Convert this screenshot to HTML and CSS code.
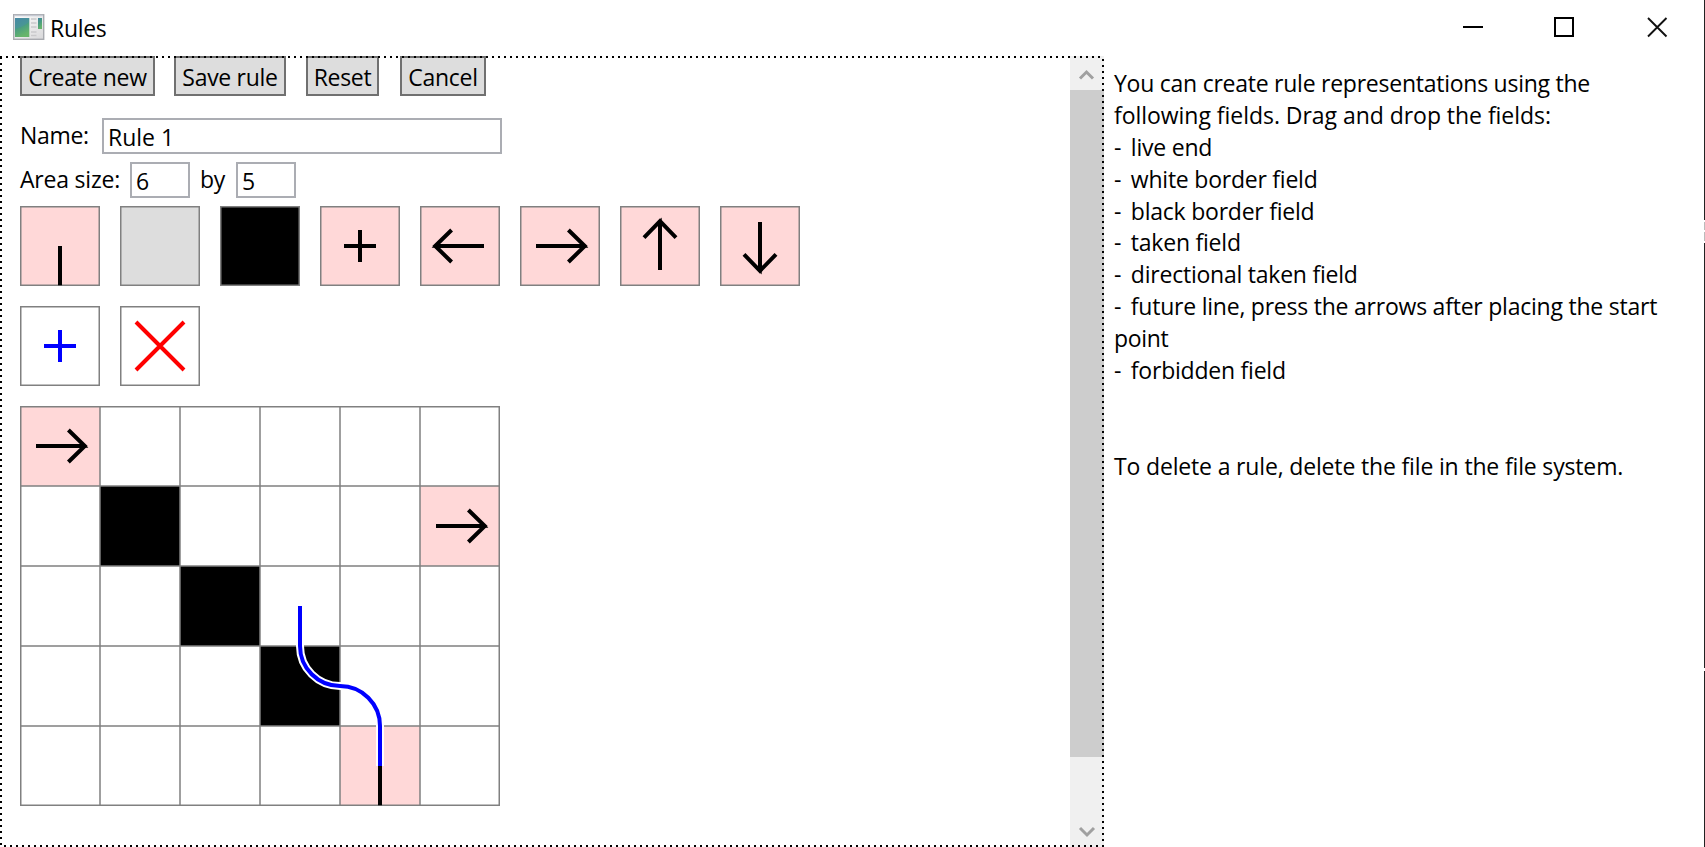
FILE: index.html
```html
<!DOCTYPE html>
<html lang="en">
<head>
<meta charset="utf-8">
<title>Rules</title>
<link rel="stylesheet" href="styles.css">
</head>
<body>
<svg class="defs" width="0" height="0" aria-hidden="true">
  <defs>
    <g id="arrow-right"><path d="M16 40H64M48.4 24L64.8 40L48.4 56" fill="none" stroke="#000" stroke-width="4"/><path d="M62 41.7L65 38.5L68.4 41.7Z"/></g>
    <g id="arrow-left"><path d="M64 40H16M31.6 24L15.2 40L31.6 56" fill="none" stroke="#000" stroke-width="4"/><path d="M18 41.7L15 38.5L11.6 41.7Z"/></g>
    <g id="arrow-up"><path d="M40 64V16M24 31.6L40 15.2L56 31.6" fill="none" stroke="#000" stroke-width="4"/><path d="M41.7 18L38.5 15L41.7 11.6Z"/></g>
    <g id="arrow-down"><path d="M40 16V64M24 48.4L40 64.8L56 48.4" fill="none" stroke="#000" stroke-width="4"/><path d="M41.7 62L38.5 65L41.7 68.4Z"/></g>
    <rect id="frame" x=".75" y=".75" width="78.5" height="78.5" fill="none" stroke="#808080" stroke-width="1.5"/>
  </defs>
</svg>
<div class="window">
  <header class="titlebar">
    <svg class="app-icon" width="32" height="28" viewBox="0 0 32 28">
      <defs>
        <linearGradient id="pane" x1="0" y1="0" x2=".4" y2="1"><stop offset="0" stop-color="#4383a0"/><stop offset=".5" stop-color="#479b83"/><stop offset="1" stop-color="#67b56b"/></linearGradient>
        <linearGradient id="body" x1="0" y1="0" x2="1" y2="1"><stop offset="0" stop-color="#fff"/><stop offset="1" stop-color="#d8d8da"/></linearGradient>
      </defs>
      <rect x=".7" y=".7" width="30" height="24.6" fill="url(#body)" stroke="#a9abb0" stroke-width="1.4"/>
      <path d="M1 1.5H30" stroke="#c6cad3" stroke-width="1.5"/>
      <rect x="2" y="4" width="14.3" height="19" fill="url(#pane)"/>
      <path d="M2 15Q10 13 16 8V4H2Z" fill="#4b8eac" opacity=".45"/>
      <path d="M18 5H23.5M18 9H23.5M18 13H23.5M18 18H23.5M18 21.5H23.5" stroke="#c9c9cb" stroke-width="1.4"/>
      <rect x="25" y="4" width="4" height="11" fill="url(#pane)"/>
    </svg>
    <span class="title">Rules</span>
    <svg class="controls" width="205" height="22" viewBox="0 0 205 22">
      <path d="M0 11H20" stroke="#000" stroke-width="2"/>
      <rect x="92" y="2" width="18" height="18" fill="none" stroke="#000" stroke-width="2"/>
      <path d="M185 2L203.500 20.500M203.500 2L185 20.500" stroke="#111" stroke-width="1.900"/>
    </svg>
  </header>
  <div class="content">
    <main class="editor">
      <div class="workspace">
        <div class="toolbar">
          <button class="btn create"><span>Create new</span></button>
          <button class="btn save"><span>Save rule</span></button>
          <button class="btn reset"><span>Reset</span></button>
          <button class="btn cancel"><span>Cancel</span></button>
        </div>
        <div class="row name-row"><span class="name-label">Name:</span><div class="field name">Rule 1</div></div>
        <div class="row size-row"><span class="size-label">Area size:</span><div class="field size">6</div><span class="by">by</span><div class="field size">5</div></div>
        <div class="palette">
          <svg class="tile pink"><use href="#frame"/><path d="M40 40V79.300" stroke="#000" stroke-width="4"/></svg>
          <svg class="tile grey"><use href="#frame"/></svg>
          <svg class="tile black"><use href="#frame"/></svg>
          <svg class="tile pink"><use href="#frame"/><path d="M24 40H56M40 24V56" stroke="#000" stroke-width="4"/></svg>
          <svg class="tile pink"><use href="#frame"/><use href="#arrow-left"/></svg>
          <svg class="tile pink"><use href="#frame"/><use href="#arrow-right"/></svg>
          <svg class="tile pink"><use href="#frame"/><use href="#arrow-up"/></svg>
          <svg class="tile pink"><use href="#frame"/><use href="#arrow-down"/></svg>
          <svg class="tile"><use href="#frame"/><path d="M24 40H56M40 24V56" stroke="#00f" stroke-width="4"/></svg>
          <svg class="tile"><use href="#frame"/><path d="M16 16L64 64M64 16L16 64" stroke="#f00" stroke-width="4"/></svg>
        </div>
        <svg class="board" width="480" height="400" viewBox="0 0 480 400">
          <g fill="#ffd8d8"><rect width="80" height="80"/><rect x="400" y="80" width="80" height="80"/><rect x="320" y="320" width="80" height="80"/></g>
          <rect x="80" y="80" width="80" height="80"/><rect x="160" y="160" width="80" height="80"/><rect x="240" y="240" width="80" height="80"/>
          <path d="M80 0V400M160 0V400M240 0V400M320 0V400M400 0V400M0 80H480M0 160H480M0 240H480M0 320H480" stroke="#808080" stroke-width="1.500"/>
          <rect x=".75" y=".75" width="478.500" height="398.500" fill="none" stroke="#808080" stroke-width="1.500"/>
          <use href="#arrow-right"/>
          <use href="#arrow-right" x="400" y="80"/>
          <path d="M360 360V399.300" stroke="#000" stroke-width="4"/>
          <g fill="none">
            <path d="M280 200V240A40 40 0 0 0 320 280A40 40 0 0 1 360 320V360" stroke="#fff" stroke-width="8"/>
            <path d="M280 200V240A40 40 0 0 0 320 280A40 40 0 0 1 360 320V360" stroke="#00f" stroke-width="4"/>
          </g>
        </svg>
      </div>
      <div class="scrollbar">
        <svg width="34" height="32" viewBox="0 0 34 32"><path d="M10 20.500L16.500 14L23 20.500" fill="none" stroke="#a0a0a0" stroke-width="3"/></svg>
        <div class="thumb"></div>
        <svg width="34" height="32" viewBox="0 0 34 32"><path d="M10 15L17 22L24 15" fill="none" stroke="#a0a0a0" stroke-width="3"/></svg>
      </div>
      <div class="dots"></div>
    </main>
    <aside class="help">
      <p class="intro">You can create rule representations using the</p>
      <p class="intro-end">following fields. Drag and drop the fields:</p>
      <p class="item">- live end</p>
      <p class="item">- white border field</p>
      <p class="item">- black border field</p>
      <p class="item">- taken field</p>
      <p class="item">- directional taken field</p>
      <p class="item long">- future line, press the arrows after placing the start</p>
      <p>point</p>
      <p class="item">- forbidden field</p>
      <p class="note">To delete a rule, delete the file in the file system.</p>
    </aside>
  </div>
  <div class="edge"></div>
</div>
</body>
</html>
```
FILE: styles.css
```css
* { box-sizing: border-box; }
body {
  margin: 0;
  background: #fff;
  color: #000;
  font: 23px/32px "Open Sans", "Noto Sans", sans-serif;
  letter-spacing: -0.3px;
  white-space: nowrap;
  overflow: hidden;
}
.defs { position: absolute; }
.window { position: relative; width: 1705px; height: 847px; display: flex; flex-direction: column; }
.edge {
  position: absolute; top: 0; right: 0; width: 1px; height: 847px;
  background: linear-gradient(#222 220px, #fff 220px 222px, #bbb 222px 230px, #fff 230px 232px, #bbb 232px 241px, #fff 241px 243px, #222 243px 668px, #fff 668px 671px, #222 671px);
}
.titlebar { height: 56px; flex: none; display: flex; padding-left: 13px; }
.app-icon { margin-top: 14px; }
.title { margin: 12px 0 0 5px; }
.controls { margin: 16px 37px 0 auto; }
.content { display: flex; height: 791px; }
.editor { position: relative; width: 1104px; display: flex; }
.workspace { width: 1070px; padding-left: 20px; }
.toolbar { display: flex; height: 40px; }
.btn {
  height: 40px; padding: 2px 0 0; border: 2px solid #707070; background: #ddd; color: #000;
  font: inherit; letter-spacing: inherit; display: flex; justify-content: center; align-items: center;
}
.create { width: 135px; margin-right: 19px; }
.save { width: 112px; margin-right: 20px; }
.reset { width: 73px; margin-right: 21px; }
.cancel { width: 86px; }
.row { display: flex; height: 36px; }
.row > span { padding-top: 1px; }
.name-row { margin-top: 22px; }
.size-row { margin-top: 8px; }
.name-label { width: 82px; }
.size-label { width: 110px; letter-spacing: -0.2px; }
.row > .by { width: 46px; padding-left: 10px; }
.field { height: 36px; border: 2px solid #abadb3; padding: 1px 0 0 4px; line-height: 32px; }
.name { width: 400px; letter-spacing: 0; }
.size { width: 60px; }
.palette { margin-top: 8px; display: grid; grid-template-columns: repeat(8, 80px); gap: 20px; }
.tile { width: 80px; height: 80px; display: block; }
.pink { background: #ffd8d8; }
.grey { background: #ddd; }
.black { background: #000; }
.board { display: block; margin-top: 20px; }
.scrollbar { width: 34px; padding: 2px 0; background: #f0f0f0; display: flex; flex-direction: column; }
.scrollbar svg { display: block; flex: none; }
.thumb { height: 667px; margin-bottom: auto; background: #cdcdcd; }
.dots {
  position: absolute; inset: 0; pointer-events: none;
  background:
    repeating-linear-gradient(90deg, #000 0 2px, transparent 2px 6px) 0 0 / 1104px 2px repeat-x,
    repeating-linear-gradient(90deg, #000 0 2px, transparent 2px 6px) 4px 100% / 1104px 2px repeat-x,
    repeating-linear-gradient(#000 0 2px, transparent 2px 6px) 0 1px / 2px 792px repeat-y,
    repeating-linear-gradient(#000 0 2px, transparent 2px 6px) 100% 3px / 2px 792px repeat-y;
}
.help { padding: 11px 0 0 10px; }
.help p { margin: 0; height: 31.900px; }
.help .intro { letter-spacing: -0.25px; }
.help .intro-end { letter-spacing: -0.04px; }
.help .item::first-letter { letter-spacing: 3.700px; }
.help .item { letter-spacing: -0.23px; }
.help .note { margin-top: 64px; letter-spacing: -0.16px; }
```
